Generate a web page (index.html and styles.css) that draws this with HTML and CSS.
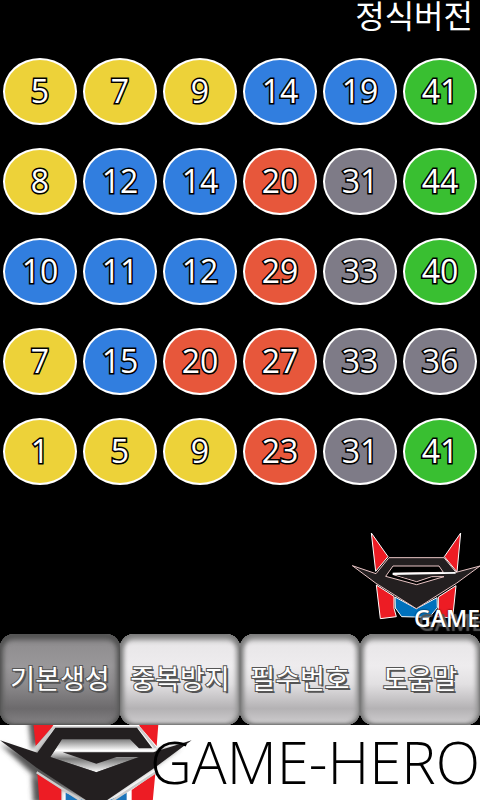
FILE: index.html
```html
<!DOCTYPE html>
<html lang="ko">
<head>
  <meta charset="UTF-8">
  <meta name="viewport" content="width=device-width, initial-scale=1.0">
  <title>GAME-HERO</title>
  <link rel="stylesheet" href="styles.css">
</head>
<body>
  <h1 class="title">정식버전</h1>

  <main class="balls">
    <span class="ball yellow">5</span>
    <span class="ball yellow">7</span>
    <span class="ball yellow">9</span>
    <span class="ball blue">14</span>
    <span class="ball blue">19</span>
    <span class="ball green">41</span>

    <span class="ball yellow">8</span>
    <span class="ball blue">12</span>
    <span class="ball blue">14</span>
    <span class="ball red">20</span>
    <span class="ball gray">31</span>
    <span class="ball green">44</span>

    <span class="ball blue">10</span>
    <span class="ball blue">11</span>
    <span class="ball blue">12</span>
    <span class="ball red">29</span>
    <span class="ball gray">33</span>
    <span class="ball green">40</span>

    <span class="ball yellow">7</span>
    <span class="ball blue">15</span>
    <span class="ball red">20</span>
    <span class="ball red">27</span>
    <span class="ball gray">33</span>
    <span class="ball gray">36</span>

    <span class="ball yellow">1</span>
    <span class="ball yellow">5</span>
    <span class="ball yellow">9</span>
    <span class="ball red">23</span>
    <span class="ball gray">31</span>
    <span class="ball green">41</span>
  </main>

  <div class="emblem">
    <svg class="emblem-icon" viewBox="0 0 420 342" aria-hidden="true">
      <g stroke="#fff" stroke-width="3" stroke-linejoin="round">
        <path fill="#ed1c24" d="M94 39 L144 110 L107 154 Z M362 39 L313 110 L351 156 Z"/>
        <path fill="#ed1c24" d="M109 195 L162 229 L162 265 L169 290 L121 296 Z M348 197 L295 231 L295 265 L288 290 L338 294 Z"/>
        <path fill="#0071bc" d="M165 231 L229 266 L291 233 L292 263 L268 292 L185 290 L166 264 Z"/>
        <path fill="#231f20" stroke="#e9c5c5" d="M37 137 L108 161 L147 113 L312 113 L348 157 L420 138 L349 190 L229 266 L108 190 Z"/>
        <path fill="#000" stroke="#e9c5c5" d="M159 138 L137 169 L230 194 L312 170 L275 170 L230 185 L160 164 L160 160 L310 157 L297 138 Z"/>
        <path fill="#fff" stroke="none" d="M158 158 L347 156 L347 161 L158 165 Z"/>
        <path fill="#231f20" stroke="none" d="M168 166 L312 166 L275 167 L230 182 Z"/>
      </g>
    </svg>
    <span class="emblem-name">GAME</span>
  </div>

  <nav class="menu">
    <button class="menu-button active" type="button">기본생성</button>
    <button class="menu-button" type="button">중복방지</button>
    <button class="menu-button" type="button">필수번호</button>
    <button class="menu-button" type="button">도움말</button>
  </nav>

  <footer class="banner">
    <svg class="banner-icon" viewBox="0 15 600 225" aria-hidden="true">
      <defs>
        <filter id="soft" x="-20%" y="-20%" width="140%" height="140%">
          <feGaussianBlur stdDeviation="8"/>
        </filter>
        <linearGradient id="shade" x1="0" y1="0" x2="0" y2="1">
          <stop offset="0" stop-color="#777"/>
          <stop offset="0.35" stop-color="#fff"/>
          <stop offset="0.6" stop-color="#777"/>
          <stop offset="1" stop-color="#fff"/>
        </linearGradient>
      </defs>
      <g fill="#555" filter="url(#soft)">
        <path d="M85 0 L150 0 L150 30 L95 90 Z M95 165 L180 210 L180 250 L100 250 Z"/>
        <path d="M0 72 L100 110 L150 50 L410 45 L450 95 L540 82 L460 140 L290 255 L100 165 Z"/>
      </g>
      <path fill="#ed1c24" d="M99 0 L168 0 L157 20 L107 78 Z M476 0 L410 0 L420 20 L470 78 Z"/>
      <path fill="#ed1c24" d="M112 160 L184 208 L184 245 L118 245 Z M466 160 L395 210 L395 245 L458 245 Z"/>
      <path fill="#1b75bb" d="M197 218 L260 245 L197 245 Z M380 218 L318 245 L380 245 Z"/>
      <path fill="none" stroke="#ccc" stroke-width="7" d="M107 85 L162 22 L417 22 L467 85 M110 157 L255 250 M468 157 L325 250"/>
      <path fill="url(#shade)" d="M186 56 L392 56 L418 84 L470 84 L465 100 L417 111 L289 157 L151 111 Z"/>
      <path fill="#231f20" d="M0 61 L112 98 L166 23 L411 23 L457 85 L417 85 L390 58 L186 58 L151 111 L289 157 L417 111 L350 111 L289 131 L188 97 L460 97 L575 61 L464 143 L310 248 L270 248 L110 143 Z"/>
    </svg>
    <span class="banner-name">GAME-HERO</span>
  </footer>
</body>
</html>
```

FILE: styles.css
```css
* {
  box-sizing: border-box;
}

body {
  margin: 0;
  min-height: 100vh;
  display: flex;
  flex-direction: column;
  background-color: #000;
  color: #fff;
  font-family: "Open Sans", "Noto Sans CJK KR", sans-serif;
  overflow-x: hidden;
}

.title {
  margin: 0;
  padding: 0 7px 0 0;
  height: 58px;
  font-size: 32px;
  font-weight: 400;
  line-height: 28px;
  text-align: right;
  font-family: "Noto Sans CJK KR", sans-serif;
}

/* number balls */
.balls {
  display: grid;
  grid-template-columns: repeat(6, 1fr);
  gap: 23px 6px;
  padding: 0 3px;
}

.ball {
  height: 67px;
  border: 2px solid #fff;
  border-radius: 50%;
  font-size: 32px;
  font-weight: 500;
  line-height: 62px;
  text-align: center;
  -webkit-text-stroke: 3px #000;
  paint-order: stroke fill;
  text-shadow: 1px 1px 0 #000;
}

.yellow {
  background-color: #edd239;
}

.blue {
  background-color: #317edf;
}

.red {
  background-color: #e7573b;
}

.gray {
  background-color: #7e7b87;
}

.green {
  background-color: #39bf31;
}

/* emblem above the menu */
.emblem {
  position: relative;
  width: 140px;
  height: 114px;
  margin: auto 0 0 auto;
}

.emblem-icon {
  display: block;
  width: 100%;
  height: 100%;
}

.emblem-name {
  position: absolute;
  right: 0;
  bottom: 2px;
  font-size: 23px;
  font-weight: 600;
  line-height: 28px;
  text-shadow: 4px 4px 1px #555, 0 0 2px #000;
}

/* bottom menu */
.menu {
  display: grid;
  grid-template-columns: repeat(4, 1fr);
}

.menu-button {
  height: 91px;
  padding: 0 0 4px;
  border: 0;
  border-radius: 14px;
  background: linear-gradient(#e6e4e6, #eeecee 35%, #e2e0e2 55%, #b4b2b4 82%, #d0ced0);
  box-shadow: inset 0 0 2px 1px #777, inset 0 7px 5px -1px #888, inset 4px 0 4px #888, inset -4px 0 4px #999, inset 0 -2px 3px #aaa;
  color: #fff;
  font-family: "Noto Sans CJK KR", sans-serif;
  font-size: 27px;
  font-weight: 400;
  line-height: 40px;
  -webkit-text-stroke: 2px #555;
  paint-order: stroke fill;
  text-shadow: 2px 2px 0 #555;
  cursor: pointer;
}

.menu-button.active {
  background: linear-gradient(#8c8a8c, #999799 35%, #8c8a8c 55%, #6c6a6c 82%, #858385);
  box-shadow: inset 0 0 2px 1px #555, inset 0 7px 5px -1px #555, inset 4px 0 4px #666, inset -4px 0 4px #666, inset 0 -2px 3px #777;
}

/* banner */
.banner {
  position: relative;
  height: 75px;
  background-color: #fff;
  color: #000;
  overflow: hidden;
}

.banner-icon {
  display: block;
  width: 200px;
  height: 75px;
}

.banner-name {
  position: absolute;
  top: 0;
  right: 0;
  font-size: 58px;
  font-weight: 300;
  line-height: 74px;
}
```
